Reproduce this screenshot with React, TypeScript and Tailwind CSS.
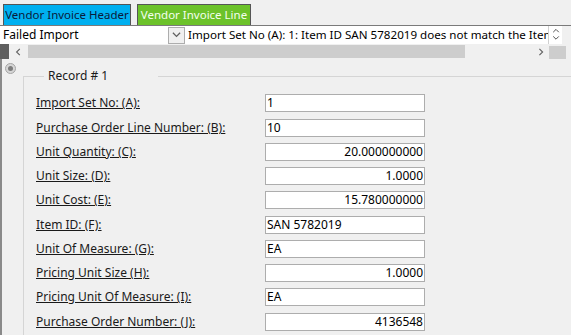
import React from "react";

type Field = { label: string; value: string; right?: boolean; extra?: boolean };

const fields: Field[] = [
  { label: "Import Set No: (A):", value: "1" },
  { label: "Purchase Order Line Number: (B):", value: "10", extra: true },
  { label: "Unit Quantity: (C):", value: "20.000000000", right: true },
  { label: "Unit Size: (D):", value: "1.0000", right: true },
  { label: "Unit Cost: (E):", value: "15.780000000", right: true },
  { label: "Item ID: (F):", value: "SAN 5782019", extra: true },
  { label: "Unit Of Measure: (G):", value: "EA" },
  { label: "Pricing Unit Size (H):", value: "1.0000", right: true },
  { label: "Pricing Unit Of Measure: (I):", value: "EA" },
  { label: "Purchase Order Number: (J):", value: "4136548", right: true, extra: true },
];

function Chevron({ dir, className }: { dir: "down" | "up" | "left" | "right"; className?: string }) {
  const d = {
    down: "M1 2 L5 6 L9 2",
    up: "M1 6 L5 2 L9 6",
    left: "M6 1 L2 5 L6 9",
    right: "M3 1 L7 5 L3 9",
  }[dir];
  return (
    <svg viewBox="0 0 10 10" className={className} fill="none" stroke="currentColor" strokeWidth="1.4">
      <path d={d} />
    </svg>
  );
}

function FieldRow({ f }: { f: Field }) {
  return (
    <div className={f.extra ? "mt-[1px] flex h-[24px] items-start" : "flex h-[24px] items-start"}>
      <span className="w-[229px] pt-[1px] text-[12px] leading-[16px] text-[#1a1a1a] underline underline-offset-[1px]">
        {f.label}
      </span>
      <div
        className={
          f.right
            ? "flex h-[18px] w-[160px] items-center justify-end border border-[#adadad] bg-white px-[1px] text-[12px] text-black"
            : "flex h-[18px] w-[160px] items-center border border-[#adadad] bg-white px-[1px] text-[12px] text-black"
        }
      >
        {f.value}
      </div>
    </div>
  );
}

export default function App() {
  return (
    <div className="h-[335px] w-[571px] overflow-hidden bg-[#f0f0f0] font-['Noto_Sans','Open_Sans',sans-serif] text-[12px]">
      {/* tabs */}
      <div className="flex h-[26px] items-end gap-[6px] border-b border-[#7a7a7a] pl-[3px]">
        <div className="flex h-[21px] w-[128px] items-center justify-center whitespace-nowrap border border-b-0 border-[#555] bg-[#00b0f0] text-[11.5px] text-[#0a1a3a]">
          Vendor Invoice Header
        </div>
        <div className="flex h-[21px] w-[114px] items-center justify-center whitespace-nowrap border border-b-0 border-[#555] bg-[#6cc22a] text-[11.5px] text-[#f4fff0]">
          Vendor Invoice Line
        </div>
      </div>

      {/* filter row */}
      <div className="flex h-[18px] items-stretch">
        <div className="flex w-[187px] items-center bg-white pl-[3px]">
          <span className="flex-1 text-[12px] text-black">Failed Import</span>
          <div className="mr-[2px] flex h-[17px] w-[17px] items-center justify-center border border-[#adadad] bg-[#f0f0f0] text-[#606060]">
            <Chevron dir="down" className="h-[9px] w-[9px]" />
          </div>
        </div>
        <div className="w-[361px] overflow-hidden whitespace-nowrap bg-white pl-[1px] text-[11.6px] leading-[18px] text-black">
          Import Set No (A): 1: Item ID SAN 5782019 does not match the Item ID
        </div>
        <div className="flex w-[14px] flex-col items-center justify-center border-l border-[#d0d0d0] bg-white text-[#505050]">
          <Chevron dir="up" className="h-[7px] w-[8px]" />
          <Chevron dir="down" className="h-[7px] w-[8px]" />
        </div>
      </div>

      {/* scrollbar */}
      <div className="flex h-[15px] items-stretch">
        <div className="w-[9px] bg-[#5f5f5f]" />
        <div className="flex w-[19px] items-center justify-center text-[#606060]">
          <Chevron dir="left" className="h-[8px] w-[8px]" />
        </div>
        <div className="my-[1px] w-[437px] bg-[#cdcdcd]" />
        <div className="flex-1" />
        <div className="flex w-[17px] items-center justify-center text-[#606060]">
          <Chevron dir="right" className="h-[8px] w-[8px]" />
        </div>
        <div className="mr-[5px] mt-[2px] w-[17px] bg-[#cdcdcd]" />
      </div>

      {/* body */}
      <div className="flex h-[276px] border-l-2 border-[#8a8a8a]">
        <div className="w-[21px] pl-[3px] pt-[4px]">
          <div className="flex h-[11px] w-[11px] items-center justify-center rounded-full border border-[#a5a5a5] bg-[#d6d6d6]">
            <div className="h-[5px] w-[5px] rounded-full bg-[#7d7d7d]" />
          </div>
        </div>
        <fieldset className="mt-[9px] flex-1 border-l border-t border-[#d5d5d5] pl-[12px]">
          <legend className="ml-[8px] w-[114px] pl-[4px] text-[12px] leading-[16px] text-[#1a1a1a]">Record # 1</legend>
          <div className="pt-[10px]">
            {fields.map((f) => (
              <FieldRow key={f.label} f={f} />
            ))}
          </div>
        </fieldset>
      </div>
    </div>
  );
}
